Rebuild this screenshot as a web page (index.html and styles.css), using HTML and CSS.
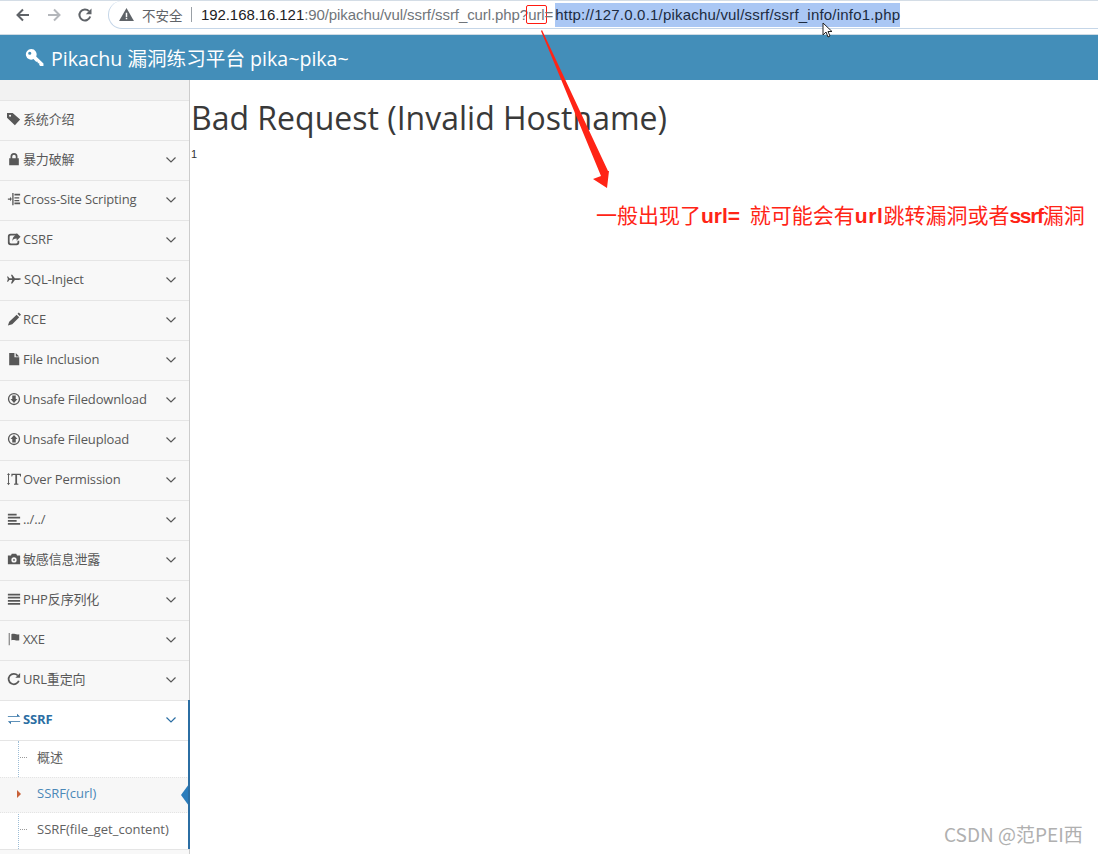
FILE: index.html
```html
<!DOCTYPE html>
<html lang="zh">
<head>
<meta charset="utf-8">
<title>Pikachu</title>
<link rel="stylesheet" href="styles.css">
</head>
<body>
<div class="toolbar">
  <svg class="tb-icon" viewBox="0 0 16 16"><path d="M14 8H3M8 2.500 2.500 8 8 13.500" fill="none" stroke="#5f6368" stroke-width="2"/></svg>
  <svg class="tb-icon off" viewBox="0 0 16 16"><path d="M2 8h11M8 2.500 13.500 8 8 13.500" fill="none" stroke="#b4b7bb" stroke-width="2"/></svg>
  <svg class="tb-icon" viewBox="0 0 16 16"><path d="M13.200 9.500A5.500 5.500 0 1 1 12 4.200" fill="none" stroke="#5f6368" stroke-width="2"/><path d="M14.500 1.500v5.700H8.800z" fill="#5f6368"/></svg>
  <div class="omnibox">
    <svg class="warn" viewBox="0 0 16 14"><path d="M8 0 16 14H0z" fill="#5f6368"/><path d="M7.200 5h1.600v4.600H7.200zM7.200 10.600h1.600v1.600H7.200z" fill="#fff"/></svg>
    <span class="insecure">不安全</span>
    <span class="sep"></span>
    <span class="url"><span class="host">192.168.16.121</span>:90/pikachu/vul/ssrf/ssrf_curl.php?<span class="boxed">url</span>=<span class="sel">http://127.0.0.1/pikachu/vul/ssrf/ssrf_info/info1.php</span></span>
  </div>
</div>
<header class="navbar">
  <svg class="key" viewBox="0 0 18 18"><path d="M6 1a5 5 0 0 1 4.600 7l6.900 6.600V17h-3l-1-1v-1.500h-1.500V13H10.500L8 10.500A5 5 0 1 1 6 1zM4.500 3.500a1.500 1.500 0 1 0 0 3 1.500 1.500 0 0 0 0-3z" fill="#fff" fill-rule="evenodd"/></svg>
  <span class="brand">Pikachu 漏洞练习平台 pika~pika~</span>
</header>
<div class="layout">
  <aside class="sidebar">
    <div class="shortcuts"></div>
    <ul class="nav">
      <li class="item"><svg class="ic" viewBox="0 0 16 16"><path d="M0 1h6.500L15 8.500 9 15 0 6.500zM3.500 3a1.200 1.200 0 1 0 0 2.400 1.200 1.200 0 0 0 0-2.400z" fill-rule="evenodd"/></svg><span class="label">系统介绍</span></li>
      <li class="item"><svg class="ic" viewBox="0 0 16 16"><path d="M4 7V5a4 4 0 0 1 8 0v2h1.500v8h-11V7zm2 0h4V5a2 2 0 0 0-4 0z" fill-rule="evenodd"/></svg><span class="label">暴力破解</span><svg class="chev" viewBox="0 0 10 6"><path d="M.5.500 5 5 9.500.500" /></svg></li>
      <li class="item"><svg class="ic" viewBox="0 0 16 16"><path d="M6 1h1.500v14H6zM8.500 2H15v2H8.500zM8.500 6H14v1.500H8.500zM8.500 9H14v1.500H8.500zM8.500 12H15v2H8.500zM1 7.300h2.500V5.500L5.500 8l-2 2.500V8.800H1z"/></svg><span class="label">Cross-Site Scripting</span><svg class="chev" viewBox="0 0 10 6"><path d="M.5.500 5 5 9.500.500" /></svg></li>
      <li class="item"><svg class="ic" viewBox="0 0 16 16"><path d="M4 2h7v2H4.500A1.500 1.500 0 0 0 3 5.500v6A1.500 1.500 0 0 0 4.500 13h6a1.500 1.500 0 0 0 1.500-1.500V10h2v2a3 3 0 0 1-3 3H4a3 3 0 0 1-3-3V5a3 3 0 0 1 3-3zM11 3.500V1l4.500 4.500L11 10V7.500C8 7.500 6.500 8.500 6 11c0-4.500 2-7 5-7.500z"/></svg><span class="label">CSRF</span><svg class="chev" viewBox="0 0 10 6"><path d="M.5.500 5 5 9.500.500" /></svg></li>
      <li class="item"><svg class="ic" viewBox="0 0 16 16"><path d="M0 5h1.200l1.500 2H6L4.500 3h1.500l3 4h4.500c1.500 0 2.500.6 2.500 1s-1 1-2.500 1H9l-3 4H4.500L6 9H2.700L1.200 11H0l1-3z"/></svg><span class="label sp">SQL-Inject</span><svg class="chev" viewBox="0 0 10 6"><path d="M.5.500 5 5 9.500.500" /></svg></li>
      <li class="item"><svg class="ic" viewBox="0 0 16 16"><path d="M11 3l3 3-8 8-5 1.500L2.500 11zM12 2l1.500-1.500L16 3l-1.500 1.500z"/></svg><span class="label">RCE</span><svg class="chev" viewBox="0 0 10 6"><path d="M.5.500 5 5 9.500.500" /></svg></li>
      <li class="item"><svg class="ic" viewBox="0 0 16 16"><path d="M2.500 1h6v5h5.500v9H2.500zM10 1l4 4h-4z"/></svg><span class="label">File Inclusion</span><svg class="chev" viewBox="0 0 10 6"><path d="M.5.500 5 5 9.500.500" /></svg></li>
      <li class="item"><svg class="ic" viewBox="0 0 16 16"><path d="M8 1a7 7 0 1 1 0 14A7 7 0 0 1 8 1zm0 1.500a5.500 5.500 0 1 0 0 11 5.500 5.500 0 0 0 0-11zM6 4h4v4h2l-4 4.500L4 8h2z" fill-rule="evenodd"/></svg><span class="label">Unsafe Filedownload</span><svg class="chev" viewBox="0 0 10 6"><path d="M.5.500 5 5 9.500.500" /></svg></li>
      <li class="item"><svg class="ic" viewBox="0 0 16 16"><path d="M8 1a7 7 0 1 1 0 14A7 7 0 0 1 8 1zm0 1.500a5.500 5.500 0 1 0 0 11 5.500 5.500 0 0 0 0-11zM6 12V8H4l4-4.500L12 8h-2v4z" fill-rule="evenodd"/></svg><span class="label">Unsafe Fileupload</span><svg class="chev" viewBox="0 0 10 6"><path d="M.5.500 5 5 9.500.500" /></svg></li>
      <li class="item"><svg class="ic" viewBox="0 0 16 16"><path d="M5 2h11v3h-1l-.500-1.500H11.500V13l1.500.500v1H8v-1l1.500-.500V3.500H6.500L6 5H5zM1.700 1 3.500 3.500H2.300v9h1.200L1.700 15 0 12.500h1.200v-9H0z"/></svg><span class="label">Over Permission</span><svg class="chev" viewBox="0 0 10 6"><path d="M.5.500 5 5 9.500.500" /></svg></li>
      <li class="item"><svg class="ic" viewBox="0 0 16 16"><path d="M1 2h10v2H1zM1 5.500h14v2H1zM1 9h10v2H1zM1 12.500h14v2H1z"/></svg><span class="label">../../</span><svg class="chev" viewBox="0 0 10 6"><path d="M.5.500 5 5 9.500.500" /></svg></li>
      <li class="item"><svg class="ic" viewBox="0 0 16 16"><path d="M1 4h3.500l1-2h5l1 2H15v10H1zM8 6a3 3 0 1 0 0 6 3 3 0 0 0 0-6zm0 2a1 1 0 1 1 0 2 1 1 0 0 1 0-2z" fill-rule="evenodd"/></svg><span class="label">敏感信息泄露</span><svg class="chev" viewBox="0 0 10 6"><path d="M.5.500 5 5 9.500.500" /></svg></li>
      <li class="item"><svg class="ic" viewBox="0 0 16 16"><path d="M1 2h14v2H1zM1 5.500h14v2H1zM1 9h14v2H1zM1 12.500h14v2H1z"/></svg><span class="label">PHP反序列化</span><svg class="chev" viewBox="0 0 10 6"><path d="M.5.500 5 5 9.500.500" /></svg></li>
      <li class="item"><svg class="ic" viewBox="0 0 16 16"><path d="M2 1h1v14H2zM5 2.500c3-1.500 5 1 9 0v7c-4 1-6-1.500-9 0z"/></svg><span class="label">XXE</span><svg class="chev" viewBox="0 0 10 6"><path d="M.5.500 5 5 9.500.500" /></svg></li>
      <li class="item"><svg class="ic" viewBox="0 0 16 16"><path d="M13.500 10A6 6 0 1 1 12.300 4" fill="none" stroke="currentColor" stroke-width="2"/><path d="M15 1v5.500H9.500z"/></svg><span class="label">URL重定向</span><svg class="chev" viewBox="0 0 10 6"><path d="M.5.500 5 5 9.500.500" /></svg></li>
      <li class="item active"><svg class="ic" viewBox="0 0 16 16"><path d="M1 4.500h10.500V2L15 5.500H1zM15 11.500H4.500V14L1 10.500h14z"/></svg><span class="label">SSRF</span><svg class="chev" viewBox="0 0 10 6"><path d="M.5.500 5 5 9.500.500" /></svg></li>
      <li class="subnav">
        <ul class="sublist">
          <li class="sub">概述</li>
          <li class="sub current">SSRF(curl)</li>
          <li class="sub">SSRF(file_get_content)</li>
        </ul>
      </li>
    </ul>
  </aside>
  <main class="content">
    <h1 class="title">Bad Request (Invalid Hostname)</h1>
    <p class="one">1</p>
  </main>
</div>
<svg class="arrow" viewBox="0 0 80 165"><path d="M1 0 67 141 68 141 66 158 52 149 60 146 0 1z" fill="#ff2416"/></svg>
<p class="note">一般出现了<b>url=</b> 就可能会有<b class="u2">url</b>跳转漏洞或者<b class="ss">ssrf</b>漏洞</p>
<svg class="cursor" viewBox="0 0 12 17"><path d="M1 1v12l3-3 2 5 2-1-2-4.500h4z" fill="#fff" stroke="#222"/></svg>
<div class="mark">CSDN @范PEI西</div>
</body>
</html>
```
FILE: styles.css
```css
html, body { margin: 0; padding: 0; }
body {
  width: 1098px;
  height: 854px;
  overflow: hidden;
  position: relative;
  background: #fff;
  font-family: "Open Sans", "Noto Sans CJK SC", sans-serif;
  color: #393939;
}
ul { list-style: none; margin: 0; padding: 0; }

.toolbar {
  height: 35px;
  box-sizing: border-box;
  display: flex;
  align-items: flex-start;
  padding-left: 15px;
  background: #fff;
  border-top: 1px solid #d4dde6;
  border-bottom: 1px solid #cfdbe4;
}
.tb-icon { width: 16px; height: 16px; margin: 6px 15px 0 0; flex: none; }
.omnibox {
  width: 990px;
  height: 28px;
  box-sizing: border-box;
  display: flex;
  align-items: center;
  padding-left: 10px;
  border-radius: 14px 0 0 14px;
  border: 1px solid #c5d6e8;
  border-right: 0;
  border-top: 0;
}
.warn { width: 15px; height: 13px; flex: none; margin-right: 8px; }
.insecure { font: 13.5px "Noto Sans CJK SC", sans-serif; color: #5f6368; width: 41px; flex: none; }
.sep { width: 1px; height: 15px; background: #9aa0a6; margin: 0 9px 0 8px; flex: none; }
.url {
  font: 15px "Liberation Sans", sans-serif;
  letter-spacing: -.08px;
  color: #70757a;
  white-space: nowrap;
  line-height: 24px;
}
.host { color: #202124; }
.boxed { border: 1px solid #ff1a10; padding: 0 1px; margin: 0 -2px; border-radius: 2px; }
.sel { background: #aac7f4; color: #1c2b40; display: inline-block; letter-spacing: .2px; margin-left: 2px; }

.navbar {
  height: 45px;
  box-sizing: border-box;
  background: #438eb9;
  display: flex;
  align-items: center;
  padding-left: 25px;
  color: #fff;
}
.key { width: 19px; height: 19px; flex: none; margin-right: 7px; }
.brand { font-size: 19.6px; }

.layout { display: flex; height: 774px; }
.sidebar {
  width: 190px;
  flex: none;
  box-sizing: border-box;
  background: #f2f2f2;
  border-right: 1px solid #ccc;
  position: relative;
}
.shortcuts { height: 20px; background: #f2f2f2; }
.nav { background: #f8f8f8; height: 754px; border-top: 1px solid #e5e5e5; }
.item {
  height: 36px;
  padding: 0 0 3px 7px;
  display: flex;
  align-items: center;
  border-bottom: 1px solid #e5e5e5;
  color: #585858;
  font-size: 13px;
  letter-spacing: -.15px;
}
.ic { width: 14px; height: 14px; flex: none; fill: currentColor; margin-right: 2px; }
.label { flex: 1; white-space: nowrap; line-height: 18px; }
.label.sp { padding-left: 1px; }
.chev {
  width: 10px;
  height: 6px;
  flex: none;
  margin: 2px 13px 0 0;
  fill: none;
  stroke: currentColor;
  stroke-width: 1.200;
}
.item.active {
  background: #fff;
  color: #2b6ea3;
  font-weight: 700;
  position: relative;
}
.item.active::after {
  content: "";
  position: absolute;
  right: -1px;
  top: -1px;
  bottom: -1px;
  width: 2px;
  background: #2b6ea3;
}
.subnav { background: #fff; position: relative; border-bottom: 1px solid #e5e5e5; }
.subnav::after {
  content: "";
  position: absolute;
  right: -1px;
  top: 0;
  bottom: 0;
  width: 2px;
  background: #2b6ea3;
}
.sublist { position: relative; }
.sublist::before {
  content: "";
  position: absolute;
  left: 18px;
  top: 0;
  bottom: 0;
  border-left: 1px dotted #9dbdd6;
}
.sub {
  height: 32px;
  padding: 0 0 4px 37px;
  display: flex;
  align-items: center;
  font-size: 13px;
  line-height: 18px;
  color: #616161;
  position: relative;
  white-space: nowrap;
}
.sub::before {
  content: "";
  position: absolute;
  left: 20px;
  top: 16px;
  width: 7px;
  border-top: 1px dotted #9a9a9a;
}
.sub.current {
  background: #f7f7f7;
  color: #4b88b7;
  border-top: 1px dotted #e4e4e4;
  border-bottom: 1px dotted #e4e4e4;
  height: 30px;
}
.sub.current::before {
  left: 17px;
  top: 12px;
  width: 0;
  border: 0;
  border-left: 4px solid #c86139;
  border-top: 4px solid transparent;
  border-bottom: 4px solid transparent;
}
.sub.current::after {
  content: "";
  position: absolute;
  right: 0;
  top: 6px;
  border-right: 8px solid #2b7dbc;
  border-top: 11px solid transparent;
  border-bottom: 11px solid transparent;
}

.content { flex: 1; padding-left: 1px; }
.title {
  margin: 18px 0 0;
  font-size: 32px;
  font-weight: 400;
  line-height: 40px;
  color: #393939;
}
.one { margin: 9px 0 0; font: 11px/14px "Liberation Sans", sans-serif; color: #333; }

.arrow { position: absolute; left: 541px; top: 30px; width: 80px; height: 165px; }
.note {
  position: absolute;
  left: 596px;
  top: 200px;
  margin: 0;
  font: 21px/28px "Noto Sans CJK SC", sans-serif;
  word-spacing: 5px;
  color: #ff2416;
  white-space: nowrap;
}
.note b { font: 700 21px/28px "Liberation Sans", sans-serif; }
.note .u2 { letter-spacing: .6px; }
.note .ss { letter-spacing: -1.3px; }
.cursor { position: absolute; left: 822px; top: 22px; width: 12px; height: 17px; }
.mark {
  position: absolute;
  left: 944px;
  top: 822px;
  font: 19px/24px "Noto Sans CJK SC", sans-serif;
  color: #b0b0b0;
  white-space: nowrap;
}
```
